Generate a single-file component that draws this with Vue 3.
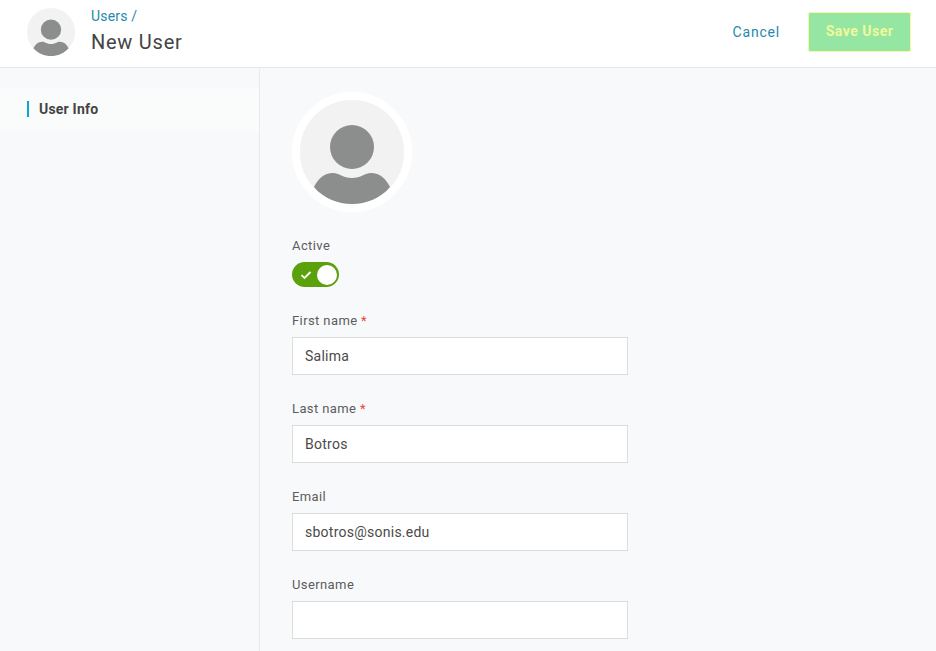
<template>
  <div class="page">
    <header class="topbar">
      <div class="title-wrap">
        <svg class="avatar-small" viewBox="0 0 104 104">
          <circle cx="52" cy="52" r="52" fill="#f2f2f2" />
          <circle cx="52" cy="47" r="22" fill="#8c8e8d" />
          <path :d="bodyPath" fill="#8c8e8d" />
        </svg>
        <div class="titles">
          <a class="crumb">Users /</a>
          <h1>New User</h1>
        </div>
      </div>
      <div class="actions">
        <a class="cancel">Cancel</a>
        <button class="save" type="button">Save User</button>
      </div>
    </header>
    <div class="main">
      <aside class="sidebar">
        <div class="nav-item"><span class="nav-text">User Info</span></div>
      </aside>
      <section class="content">
        <div class="avatar-large">
          <svg viewBox="0 0 104 104">
            <circle cx="52" cy="52" r="52" fill="#f2f2f2" />
            <circle cx="52" cy="47" r="22" fill="#8c8e8d" />
            <path :d="bodyPath" fill="#8c8e8d" />
          </svg>
        </div>
        <div class="toggle-field">
          <label>Active</label>
          <div class="toggle">
            <svg class="check" viewBox="0 0 12 10">
              <path d="M1.5 5.2 4.5 8 10.5 2" fill="none" stroke="#fff" stroke-width="1.8" />
            </svg>
            <span class="knob"></span>
          </div>
        </div>
        <div class="field" v-for="field in fields" :key="field.label">
          <label>{{ field.label }} <span v-if="field.required" class="req">*</span></label>
          <input type="text" :value="field.value" />
        </div>
      </section>
    </div>
  </div>
</template>

<script setup>
const bodyPath = 'M14 87C18 79 24 73 33 73C39 73 43 78 52 78C61 78 65 73 71 73C80 73 86 79 90 87C81 98 66 104 52 104C38 104 23 98 14 87Z'

const fields = [
  { label: 'First name', value: 'Salima', required: true },
  { label: 'Last name', value: 'Botros', required: true },
  { label: 'Email', value: 'sbotros@sonis.edu' },
  { label: 'Username', value: '' },
]
</script>

<style>
html, body {
  margin: 0;
  height: 100%;
  overflow: hidden;
  background: #f8f9fb;
}
</style>

<style scoped>
.page {
  height: 651px;
  display: flex;
  flex-direction: column;
  font-family: Roboto, "Liberation Sans", sans-serif;
  color: #444;
}

.topbar {
  height: 67px;
  flex: none;
  background: #fff;
  border-bottom: 1px solid #e6e7e8;
  display: flex;
  align-items: center;
  justify-content: space-between;
  padding: 0 25px 0 27px;
}

.title-wrap {
  display: flex;
  align-items: center;
  gap: 16px;
  margin-bottom: 3px;
}

.avatar-small {
  width: 48px;
  height: 48px;
  display: block;
}

.titles {
  display: flex;
  flex-direction: column;
}

.crumb {
  font-size: 14px;
  line-height: 16px;
  letter-spacing: 0.2px;
  color: #2689ac;
  margin-top: -1px;
}

h1 {
  margin: 4px 0 0;
  font-size: 20px;
  line-height: 28px;
  font-weight: 400;
  letter-spacing: 0.75px;
  color: #444;
}

.actions {
  display: flex;
  align-items: center;
  gap: 28px;
  margin-bottom: 3px;
}

.cancel {
  font-size: 14px;
  letter-spacing: 0.8px;
  margin-bottom: 1px;
  color: #2689ac;
}

.save {
  width: 103px;
  height: 40px;
  padding: 0 0 2px;
  background: #95e5a3;
  border: 1px solid #f3f99c;
  border-radius: 2px;
  font-family: inherit;
  font-size: 14px;
  font-weight: 700;
  letter-spacing: 0.5px;
  color: #f0f99a;
}

.main {
  flex: 1;
  display: flex;
  min-height: 0;
}

.sidebar {
  width: 259px;
  flex: none;
  border-right: 1px solid #e9eaec;
  padding-top: 20px;
}

.nav-item {
  height: 44px;
  background: #fafbfb;
  padding-left: 27px;
  padding-bottom: 2px;
  box-sizing: border-box;
  display: flex;
  align-items: center;
}

.nav-text {
  border-left: 2px solid #0ea5d8;
  padding-left: 10px;
  font-size: 14px;
  line-height: 16px;
  font-weight: 700;
  letter-spacing: 0.2px;
  color: #444;
}

.content {
  padding: 24px 0 0 32px;
}

.avatar-large {
  width: 104px;
  height: 104px;
  border: 8px solid #fff;
  border-radius: 50%;
}

.avatar-large svg {
  width: 104px;
  height: 104px;
  display: block;
}

label {
  display: block;
  font-size: 13px;
  line-height: 16px;
  letter-spacing: 0.4px;
  color: #5c5c5c;
}

.toggle-field {
  margin-top: 26px;
}

.toggle {
  width: 47px;
  height: 25px;
  margin-top: 8px;
  background: #5aa10b;
  border-radius: 13px;
  display: flex;
  align-items: center;
  justify-content: space-between;
  padding: 0 2px 0 8px;
  box-sizing: border-box;
}

.check {
  width: 12px;
  height: 10px;
}

.knob {
  width: 20px;
  height: 20px;
  background: #fff;
  border-radius: 50%;
}

.field {
  margin-top: 26px;
}

.req {
  color: #e8473f;
}

.field input {
  display: block;
  width: 336px;
  height: 38px;
  margin-top: 8px;
  box-sizing: border-box;
  background: #fff;
  border: 1px solid #dcdddf;
  padding: 0 12px;
  font-family: inherit;
  font-size: 14px;
  letter-spacing: 0.25px;
  color: #4a4a4a;
  outline: none;
}
</style>
